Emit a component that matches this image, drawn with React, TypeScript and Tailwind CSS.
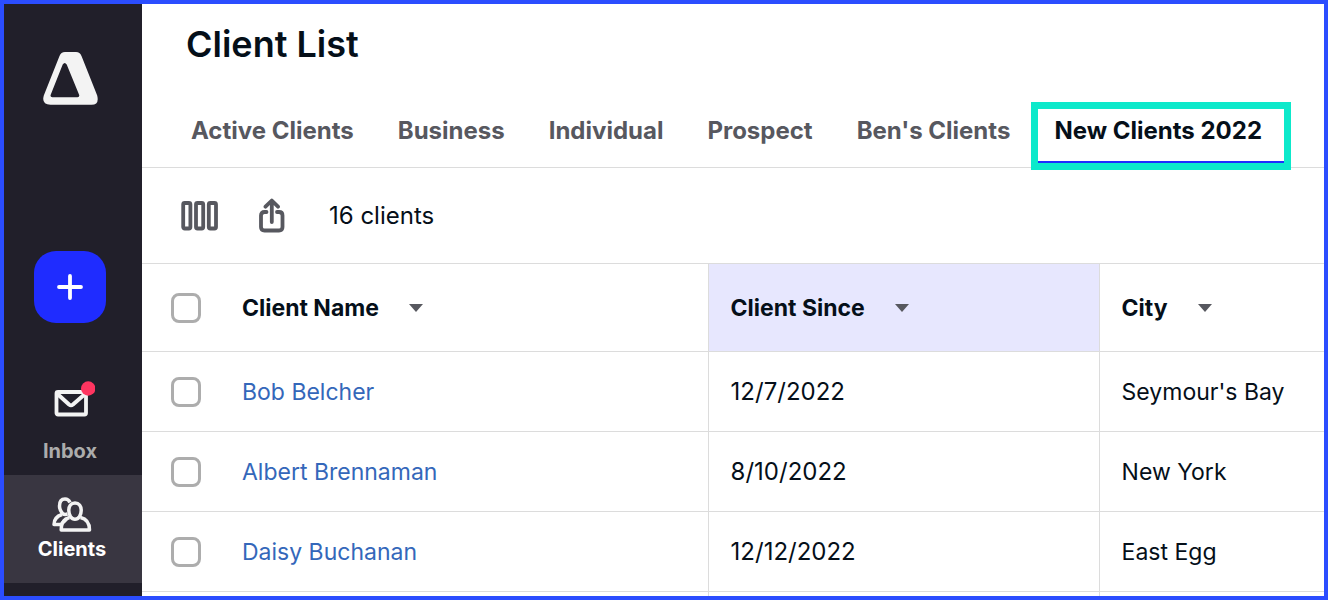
import { useState } from 'react';
import clsx from 'clsx';

const tabs = ['Active Clients', 'Business', 'Individual', 'Prospect', "Ben's Clients", 'New Clients 2022'];

const clients = [
  { name: 'Bob Belcher', since: '12/7/2022', city: "Seymour's Bay" },
  { name: 'Albert Brennaman', since: '8/10/2022', city: 'New York' },
  { name: 'Daisy Buchanan', since: '12/12/2022', city: 'East Egg' },
];

function Logo() {
  return (
    <svg width="55" height="53" viewBox="0 0 55 53" fill="#f3f3f3" fillRule="evenodd" aria-hidden="true">
      <path d="M22 0h11q4 0 5.500 4L54.200 43.500Q56.500 52.700 48.500 52.700H7.500Q-1.800 52.700.8 43.500L16.500 4Q18 0 22 0ZM19.700 12.500 7.800 42.500Q6.800 45.200 9.300 45.200H34.500Q37 45.200 36 42.500L23.700 12.500Q21.700 9.500 19.700 12.500Z" />
    </svg>
  );
}

function InboxIcon() {
  return (
    <svg width="41" height="36" viewBox="0 0 41 36" fill="none" className="translate-x-1" aria-hidden="true">
      <rect x="2.500" y="11" width="29.500" height="22.500" rx="1.500" stroke="#f3f3f3" strokeWidth="3.800" />
      <path d="m3.500 13 11.500 10.500q2 1.500 4 0L31 13" stroke="#f3f3f3" strokeWidth="4" />
      <circle cx="34.200" cy="7.500" r="7.200" fill="#ff3560" />
    </svg>
  );
}

function ClientsIcon() {
  return (
    <svg width="40" height="36" viewBox="0 0 40 36" fill="none" stroke="#f3f3f3" strokeWidth="3.500" strokeLinejoin="round" aria-hidden="true">
      <path d="M18 5.500Q16.500 2 13 2 7.500 2 7.500 9q0 4 3 7.500 2 1.500 5 .5" />
      <path d="M10 17.500Q2 20 2 27.500H8.500M8.500 25.500Q10.500 27 14.500 22" />
      <path d="M23 6c-4 0-6.200 3-6.200 7.500 0 5 2.700 8.700 6.200 8.700s6.200-3.700 6.200-8.700c0-4.500-2.200-7.500-6.200-7.500Z" />
      <path d="M17.500 20.500Q9 22.500 9.200 33H37.500Q37.500 22.500 28.500 20.500" />
    </svg>
  );
}

function ColumnsIcon() {
  return (
    <svg width="38" height="30" viewBox="0 0 38 30" fill="none" stroke="#57585f" strokeWidth="3.800" aria-hidden="true">
      <rect x="2.200" y="2" width="7.200" height="25.500" rx="1.500" />
      <rect x="15" y="2" width="7.200" height="25.500" rx="1.500" />
      <rect x="27.800" y="2" width="7.200" height="25.500" rx="1.500" />
    </svg>
  );
}

function ShareIcon() {
  return (
    <svg width="26" height="36" viewBox="0 0 26 36" fill="none" stroke="#57585f" strokeWidth="3.800" strokeLinecap="round" strokeLinejoin="round" aria-hidden="true">
      <path d="M7.500 14H5.500Q2 14 2 17.500V29Q2 32.500 5.500 32.500H20Q23.500 32.500 23.500 29V17.500Q23.500 14 20 14H18" />
      <path d="M12.800 24V3M6.500 8.700 12.800 2.500 19 8.700" />
    </svg>
  );
}

function HeaderCell({ label, highlighted = false, className }: { label: string; highlighted?: boolean; className?: string }) {
  return (
    <th className={clsx('h-[88px] border-b border-[#dcdcdc] p-0 text-left font-bold', highlighted && 'bg-[#e7e7fe]', className)}>
      <button type="button" className="flex items-center gap-[30px]">
        {label}
        <svg width="14" height="8" viewBox="0 0 14 8" fill="#57585f" aria-hidden="true">
          <path d="M0 0h14L7 8Z" />
        </svg>
      </button>
    </th>
  );
}

function Checkbox({ label }: { label: string }) {
  return (
    <input
      type="checkbox"
      aria-label={label}
      className="block size-[30px] appearance-none rounded-lg border-3 border-[#adadad] bg-white checked:bg-[#1f2cff]"
    />
  );
}

export default function App() {
  const [activeTab, setActiveTab] = useState('New Clients 2022');

  return (
    <div className="flex h-screen overflow-hidden border-4 border-[#2b4dff] bg-white font-['Inter',sans-serif] text-2xl text-[#050f19]">
      <aside className="flex w-[138px] shrink-0 flex-col items-center bg-[#211f2a] pt-12 text-xl font-bold">
        <a href="#home" aria-label="Home" className="mr-1.5">
          <Logo />
        </a>
        <button
          type="button"
          aria-label="Add"
          className="mt-[146px] mr-1.5 flex size-[72px] shrink-0 items-center justify-center rounded-[22px] bg-[#1f2cff]"
        >
          <svg width="26" height="26" viewBox="0 0 26 26" stroke="white" strokeWidth="3.800" strokeLinecap="round" aria-hidden="true">
            <path d="M13 2v22M2 13h22" />
          </svg>
        </button>
        <nav className="mt-[58px] w-full">
          <a href="#inbox" className="flex flex-col items-center gap-5 pr-1.5 pb-2.5 leading-7 text-[#acacac]">
            <InboxIcon />
            Inbox
          </a>
          <a href="#clients" className="flex h-[108px] flex-col items-center gap-0.5 bg-[#393641] pt-[22px] pr-0.5 leading-7 text-white">
            <ClientsIcon />
            Clients
          </a>
        </nav>
      </aside>

      <main className="min-w-0 flex-1">
        <header className="border-b border-[#dcdcdc]">
          <h1 className="flex h-20 items-center pl-11 text-4xl font-semibold">Client List</h1>
          <nav className="mt-2.5 flex pl-[27px]">
            {tabs.map((tab) => (
              <button
                key={tab}
                type="button"
                onClick={() => setActiveTab(tab)}
                className={clsx(
                  'relative h-[73px] px-[22px] font-bold whitespace-nowrap',
                  tab === activeTab ? 'text-[#050f19]' : 'text-[#57585f]'
                )}
              >
                {tab}
                {tab === activeTab && (
                  <>
                    <span className="absolute inset-x-0 bottom-0 h-1.5 bg-[#1f2cff]" />
                    <span className="absolute top-2 -right-[7px] -bottom-[3px] -left-px border-7 border-[#0de9cb]" />
                  </>
                )}
              </button>
            ))}
          </nav>
        </header>

        <div className="flex h-24 items-center border-b border-[#dcdcdc] pl-[39px]">
          <button type="button" aria-label="Choose columns">
            <ColumnsIcon />
          </button>
          <button type="button" aria-label="Export" className="ml-10">
            <ShareIcon />
          </button>
          <p className="ml-11">16 clients</p>
        </div>

        <table className="w-full table-fixed border-separate border-spacing-0 text-[23px] leading-8">
          <thead>
            <tr>
              <th className="w-[82px] border-b border-[#dcdcdc] p-0 pl-[29px]">
                <Checkbox label="Select all clients" />
              </th>
              <HeaderCell label="Client Name" className="w-[41%] border-r pl-[18px]" />
              <HeaderCell label="Client Since" highlighted className="w-[391px] border-r pl-[22px]" />
              <HeaderCell label="City" className="pl-[22px]" />
            </tr>
          </thead>
          <tbody>
            {clients.map((client) => (
              <tr key={client.name}>
                <td className="h-20 border-b border-[#dcdcdc] p-0 pl-[29px]">
                  <Checkbox label={`Select ${client.name}`} />
                </td>
                <td className="border-r border-b border-[#dcdcdc] p-0 pl-[18px]">
                  <a href="#client" className="text-[#3467ba]">
                    {client.name}
                  </a>
                </td>
                <td className="border-r border-b border-[#dcdcdc] p-0 pl-[22px] text-2xl">{client.since}</td>
                <td className="border-b border-[#dcdcdc] p-0 pl-[22px] whitespace-nowrap">{client.city}</td>
              </tr>
            ))}
            <tr>
              <td className="h-20 p-0" />
              <td className="border-r border-[#dcdcdc] p-0" />
              <td className="border-r border-[#dcdcdc] p-0" />
              <td className="p-0" />
            </tr>
          </tbody>
        </table>
      </main>
    </div>
  );
}
